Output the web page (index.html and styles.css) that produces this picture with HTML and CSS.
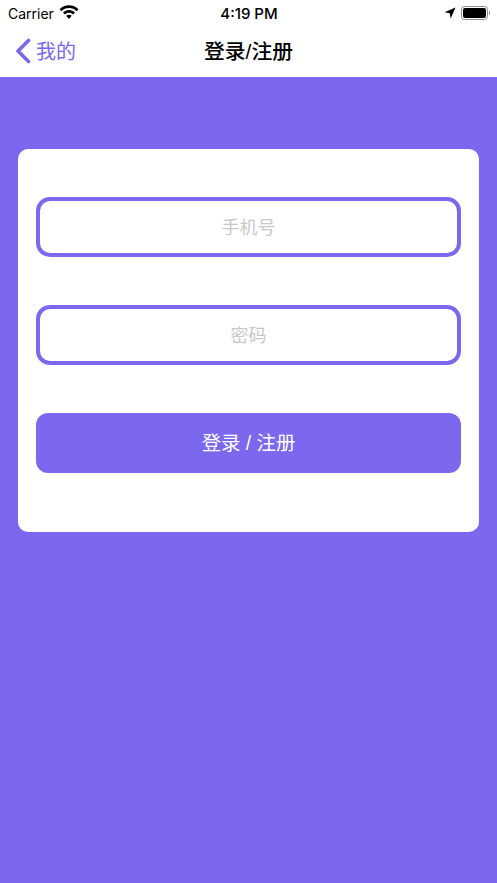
FILE: index.html
```html
<!DOCTYPE html>
<html lang="zh-CN">
	<head>
		<meta charset="UTF-8" />
		<meta name="viewport" content="width=device-width, initial-scale=1.0" />
		<title>登录/注册</title>
		<link rel="stylesheet" href="styles.css">
	</head>
	<body>
		<div class="status_bar">
			<div class="status_left">
				<span class="carrier">Carrier</span>
				<svg class="wifi" width="20" height="15" viewBox="0 0 18 14">
					<path d="M9 0.2C5.5 0.2 2.4 1.600 0.200 3.900L2 5.800C3.800 4 6.300 2.900 9 2.900s5.200 1.100 7 2.900L17.800 3.900C15.600 1.600 12.500 0.200 9 0.200z" fill="#000" />
					<path d="M9 4.700C6.800 4.700 4.900 5.500 3.400 7L5.200 8.900C6.200 7.900 7.500 7.300 9 7.300s2.800 0.600 3.800 1.600L14.600 7C13.100 5.500 11.200 4.700 9 4.700z" fill="#000" />
					<path d="M9 9C8 9 7.100 9.400 6.400 10.100L9 13l2.600-2.900C10.900 9.400 10 9 9 9z" fill="#000" />
				</svg>
			</div>
			<span class="time">4:19 PM</span>
			<div class="status_right">
				<svg class="location" width="12" height="12" viewBox="0 0 12 12">
					<path d="M11.500 0.500L0.500 5.300L5.700 6.300L6.700 11.500z" fill="#000" />
				</svg>
				<div class="battery">
					<div class="battery_level"></div>
				</div>
				<div class="battery_cap"></div>
			</div>
		</div>
		<div class="nav_bar">
			<a class="back">
				<svg width="16" height="26" viewBox="0 0 16 26">
					<path d="M13.500 2.500L3 13L13.500 23.500" fill="none" stroke="#7b68ee" stroke-width="3.600" stroke-linecap="round" stroke-linejoin="round" />
				</svg>
				<span>我的</span>
			</a>
			<span class="nav_title">登录/注册</span>
		</div>
		<main class="content">
			<form class="card">
				<div class="field"><span class="placeholder">手机号</span></div>
				<div class="field"><span class="placeholder">密码</span></div>
				<div class="submit">登录 / 注册</div>
			</form>
		</main>
	</body>
</html>
```

FILE: styles.css
```css
html,
body {
	margin: 0;
	padding: 0;
}
body {
	width: 497px;
	height: 883px;
	display: flex;
	flex-direction: column;
	background: #7b68ee;
	font-family: "Liberation Sans", "Noto Sans CJK SC", sans-serif;
	overflow: hidden;
}

.status_bar {
	height: 26px;
	background: #fff;
	display: grid;
	grid-template-columns: 1fr auto 1fr;
	align-items: center;
	padding: 0 7px 0 8px;
	color: #000;
}
.status_left {
	display: flex;
	align-items: center;
	gap: 5px;
}
.carrier {
	font-family: Inter, "Liberation Sans", sans-serif;
	font-size: 14px;
}
.wifi {
	margin-bottom: 2px;
}
.time {
	font-family: Inter, "Liberation Sans", sans-serif;
	font-size: 15px;
	font-weight: 500;
}
.status_right {
	display: flex;
	align-items: center;
	justify-content: flex-end;
}
.location {
	margin-right: 5px;
}
.battery {
	width: 23px;
	height: 10px;
	padding: 1px;
	border: 1px solid #8e8e8e;
	border-radius: 3.500px;
}
.battery_level {
	height: 100%;
	background: #000;
	border-radius: 2px;
}
.battery_cap {
	width: 1.500px;
	height: 4px;
	margin-left: 1px;
	background: #8e8e8e;
	border-radius: 0 1px 1px 0;
}

.nav_bar {
	height: 47px;
	padding-bottom: 4px;
	background: #fff;
	display: flex;
	align-items: center;
	justify-content: center;
	position: relative;
}
.back {
	position: absolute;
	left: 15px;
	top: 10px;
	display: flex;
	align-items: center;
	gap: 5px;
	color: #7b68ee;
	font-size: 20px;
}
.nav_title {
	font-size: 20.800px;
	font-weight: 500;
	color: #000;
}

.content {
	flex: 1;
	padding: 72px 18px 0;
}
.card {
	background: #fff;
	border-radius: 10px;
	padding: 48px 18px 59px;
	display: flex;
	flex-direction: column;
	gap: 48px;
}
.field {
	height: 60px;
	box-sizing: border-box;
	border: 4px solid #7b68ee;
	border-radius: 14px;
	padding-bottom: 2px;
	display: flex;
	align-items: center;
	justify-content: center;
}
.placeholder {
	font-size: 18px;
	color: #c8c8c8;
}
.submit {
	height: 60px;
	box-sizing: border-box;
	padding-bottom: 3px;
	background: #7b68ee;
	border-radius: 12px;
	color: #fff;
	font-size: 19.400px;
	display: flex;
	align-items: center;
	justify-content: center;
}
```
